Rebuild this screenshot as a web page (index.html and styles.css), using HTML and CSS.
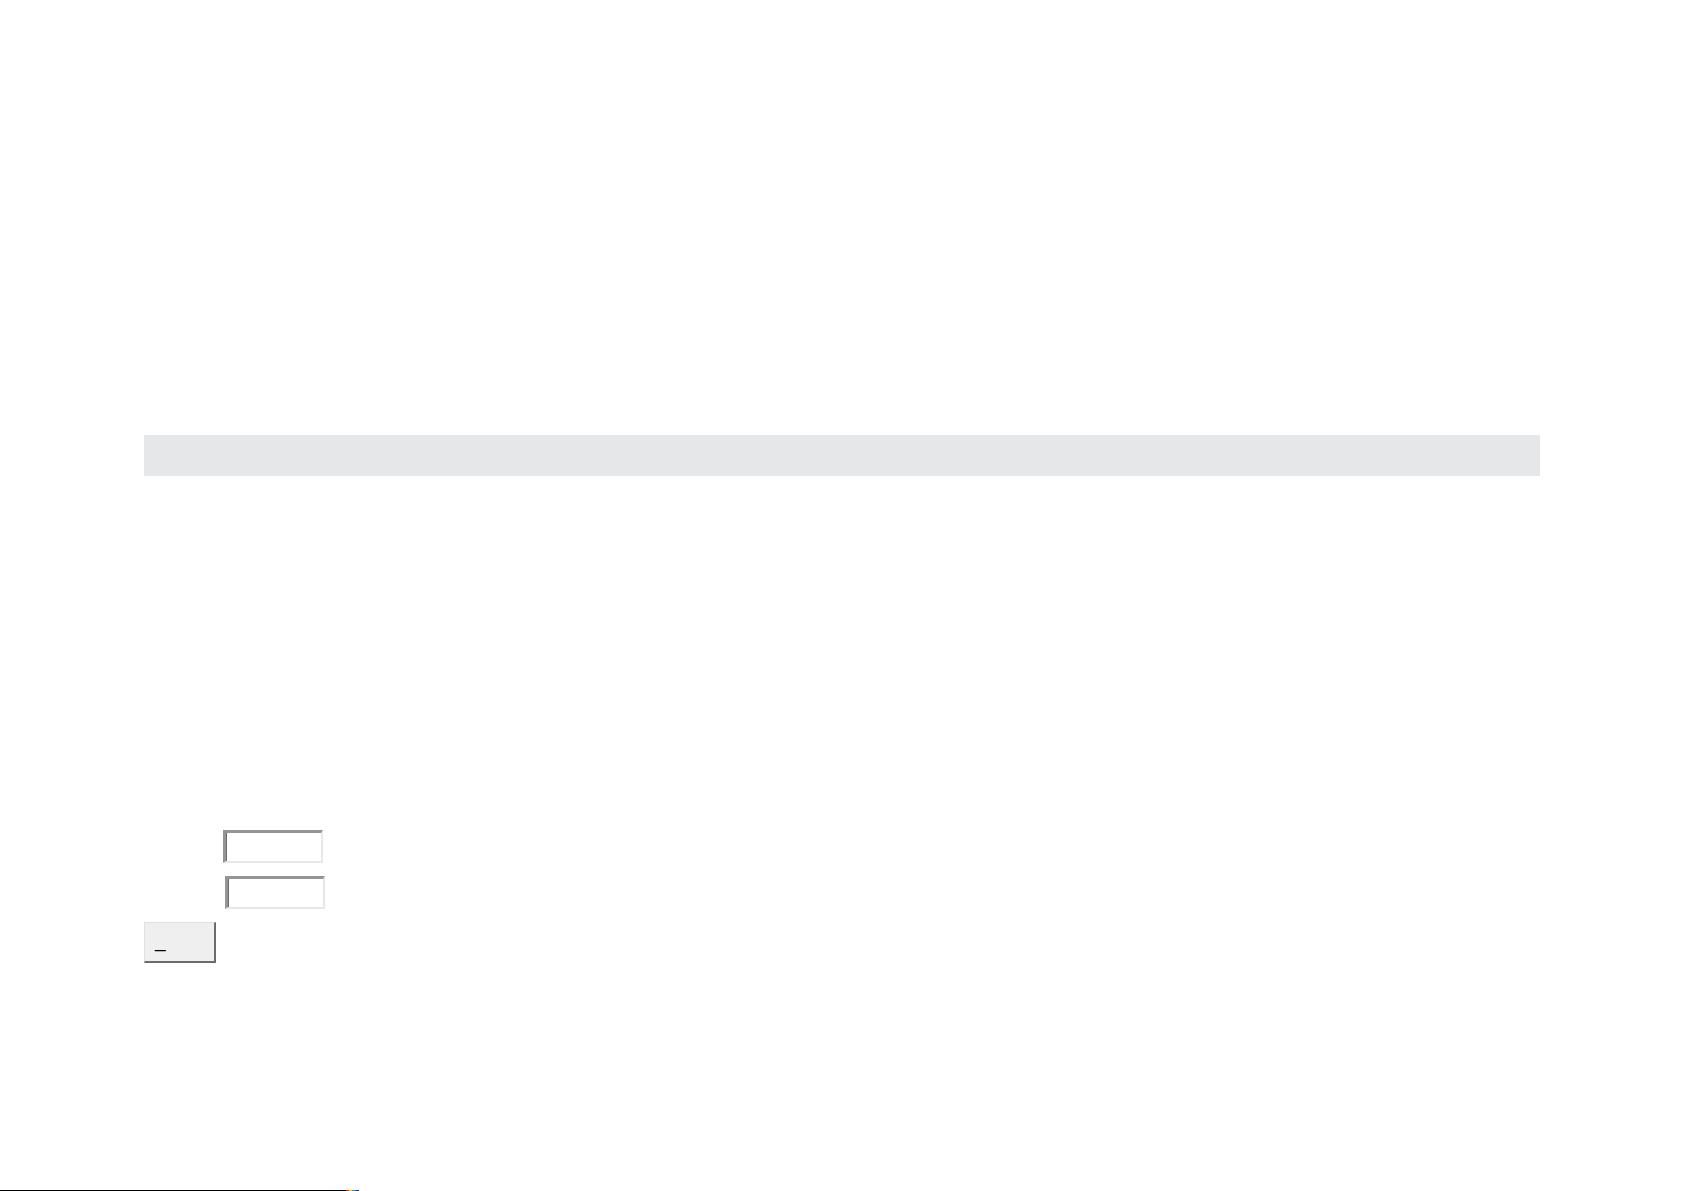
FILE: index.html
```html
<!DOCTYPE html>
<html lang="en">
<head>
<meta charset="utf-8">
<title>Form</title>
<link rel="stylesheet" href="styles.css">
</head>
<body>
<div class="page">
  <main class="content">
    <div class="bar"></div>
    <form class="form">
      <div class="row row-one"><span class="label"></span><span class="field"></span></div>
      <div class="row row-two"><span class="label"></span><span class="field"></span></div>
      <div class="row row-btn"><span class="button">_</span></div>
    </form>
  </main>
  <footer class="footer">
    <span class="rule"></span>
    <span class="dots"><i class="d red"></i><i class="d yellow"></i><i class="d green"></i><i class="d blue"></i><i class="d navy"></i></span>
  </footer>
</div>
</body>
</html>
```
FILE: styles.css
```css
html, body {
  margin: 0;
  padding: 0;
  background: #ffffff;
  font-family: "Liberation Sans", Arial, sans-serif;
  overflow: hidden;
}
.page {
  height: 1191px;
  display: flex;
  flex-direction: column;
}
.content {
  padding: 435px 0 0 144px;
}
.bar {
  width: 1396px;
  height: 41px;
  background: #e6e7e9;
}
.form {
  margin-top: 354px;
  display: flex;
  flex-direction: column;
}
.row {
  display: flex;
  align-items: flex-start;
}
.row-one .label { width: 79px; }
.row-two { margin-top: 13px; }
.row-two .label { width: 81px; }
.row-btn { margin-top: 13px; }
.field {
  display: block;
  box-sizing: border-box;
  width: 100px;
  height: 33px;
  background: #ffffff;
  border-top: 3px solid #959595;
  border-left: 3px solid #959595;
  border-right: 2px solid #e8e8e8;
  border-bottom: 2px solid #e8e8e8;
  box-shadow: inset 1px 0 0 #6a6a6a;
}
.button {
  display: flex;
  align-items: flex-end;
  box-sizing: border-box;
  width: 72px;
  height: 41px;
  padding: 0 0 11px 10px;
  background: #efefef;
  border-top: 1px solid #e0e0e0;
  border-left: 1px solid #e0e0e0;
  border-right: 2px solid #6b6b6b;
  border-bottom: 2px solid #6b6b6b;
  font-size: 19px;
  color: #000;
  line-height: 1;
}
.footer {
  margin-top: auto;
  display: flex;
  align-items: flex-end;
  height: 1px;
}
.rule {
  display: block;
  width: 346px;
  height: 1px;
  background: #000;
}
.dots {
  display: flex;
}
.d {
  display: block;
  width: 2px;
  height: 1px;
}
.red { background: #e0301e; width: 3px; }
.yellow { background: #f2c500; width: 3px; }
.green { background: #3aa655; }
.blue { background: #1f5fd6; width: 3px; }
.navy { background: #1a237e; width: 2px; }
```
